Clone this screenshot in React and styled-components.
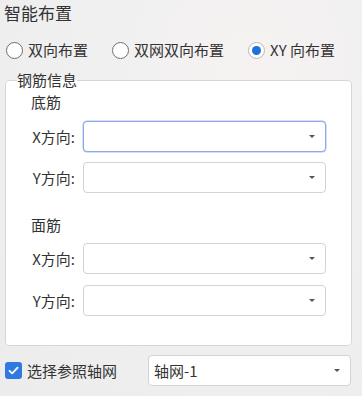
import React from "react";
import styled, { createGlobalStyle } from "styled-components";

const Global = createGlobalStyle`
  html, body { margin: 0; padding: 0; }
  body {
    width: 362px;
    height: 396px;
    overflow: hidden;
    background: radial-gradient(ellipse at 70% 20%, #f6f2f2 0%, #f0f0f0 45%, #ececec 100%);
    font-family: "Noto Sans CJK SC", "Noto Sans", sans-serif;
    color: #333;
  }
`;

const Page = styled.div`
  display: flex;
  flex-direction: column;
  padding: 2px 10px 0 4px;
`;

const Title = styled.div`
  font-size: 17px;
  line-height: 22px;
  height: 22px;
`;

const RadioRow = styled.div`
  display: flex;
  align-items: center;
  gap: 24px;
  margin-top: 16px;
  padding-left: 2px;
  height: 20px;
`;

const RadioItem = styled.label`
  display: flex;
  align-items: center;
  gap: 5px;
  font-size: 15px;
  line-height: 20px;
`;

const RadioCircle = styled.span`
  box-sizing: border-box;
  width: 17px;
  height: 17px;
  border-radius: 50%;
  background: #fff;
  border: 1px solid ${(p) => (p.$checked ? "#b8b8b8" : "#6f6f6f")};
  display: flex;
  align-items: center;
  justify-content: center;
  &::after {
    content: "";
    display: ${(p) => (p.$checked ? "block" : "none")};
    width: 9px;
    height: 9px;
    border-radius: 50%;
    background: #1f6fdd;
  }
`;

const Group = styled.fieldset`
  margin: 11px 0 0 1px;
  padding: 0;
  border: 1px solid #d6d6d6;
  border-radius: 4px;
  background: #fff;
  min-width: 0;
`;

const Legend = styled.legend`
  font-size: 15px;
  line-height: 18px;
  padding: 0;
  margin-left: 11px;
  color: #333;
`;

const GroupBody = styled.div`
  display: flex;
  flex-direction: column;
  padding: 0 27px 29px 25px;
`;

const Heading = styled.div`
  font-size: 15px;
  line-height: 20px;
  margin-top: ${(p) => p.$top}px;
`;

const FieldRow = styled.div`
  display: grid;
  grid-template-columns: 44px 243px;
  column-gap: 8px;
  align-items: center;
  margin-top: ${(p) => p.$top}px;
`;

const Label = styled.span`
  font-size: 15px;
  text-align: right;
  white-space: nowrap;
`;

const Select = styled.div`
  box-sizing: border-box;
  width: ${(p) => p.$w || 243}px;
  height: 31px;
  border: 1px solid ${(p) => (p.$focus ? "#8ea9e6" : "#d3d3d3")};
  border-radius: 4px;
  background: #fff;
  display: flex;
  align-items: center;
  padding: 0 8px 0 5px;
  font-size: 15px;
  color: #333;
  ${(p) => p.$focus && "box-shadow: 0 0 0 0.5px #a9bff0;"}
`;

const Value = styled.span`
  flex: 1;
`;

const Arrow = styled.span`
  width: 0;
  height: 0;
  border-left: 3px solid transparent;
  border-right: 3px solid transparent;
  border-top: 3px solid #555;
  margin-right: 2px;
`;

const BottomRow = styled.div`
  display: flex;
  align-items: center;
  margin-top: 9px;
  padding-left: 1px;
  height: 31px;
`;

const CheckLabel = styled.label`
  display: flex;
  align-items: center;
  gap: 5px;
  font-size: 15px;
  width: 143px;
`;

const CheckBox = styled.span`
  width: 17px;
  height: 17px;
  border-radius: 3px;
  background: #2f79e0;
  display: flex;
  align-items: center;
  justify-content: center;
`;

const Radio = ({ checked, children }) => (
  <RadioItem>
    <RadioCircle $checked={checked} />
    <span>{children}</span>
  </RadioItem>
);

const Combo = ({ focus, w, value }) => (
  <Select $focus={focus} $w={w}>
    <Value>{value}</Value>
    <Arrow />
  </Select>
);

export default function App() {
  return (
    <>
      <Global />
      <Page>
        <Title>智能布置</Title>
        <RadioRow>
          <Radio>双向布置</Radio>
          <Radio>双网双向布置</Radio>
          <Radio checked>XY 向布置</Radio>
        </RadioRow>
        <Group>
          <Legend>钢筋信息</Legend>
          <GroupBody>
            <Heading $top={3}>底筋</Heading>
            <FieldRow $top={9}>
              <Label>X方向:</Label>
              <Combo focus />
            </FieldRow>
            <FieldRow $top={10}>
              <Label>Y方向:</Label>
              <Combo />
            </FieldRow>
            <Heading $top={22}>面筋</Heading>
            <FieldRow $top={8}>
              <Label>X方向:</Label>
              <Combo />
            </FieldRow>
            <FieldRow $top={11}>
              <Label>Y方向:</Label>
              <Combo />
            </FieldRow>
          </GroupBody>
        </Group>
        <BottomRow>
          <CheckLabel>
            <CheckBox>
              <svg width="13" height="13" viewBox="0 0 13 13">
                <path d="M2.5 6.8 L5.2 9.4 L10.6 3.6" fill="none" stroke="#fff" strokeWidth="1.8" strokeLinecap="round" strokeLinejoin="round" />
              </svg>
            </CheckBox>
            <span>选择参照轴网</span>
          </CheckLabel>
          <Combo w={203} value="轴网-1" />
        </BottomRow>
      </Page>
    </>
  );
}
